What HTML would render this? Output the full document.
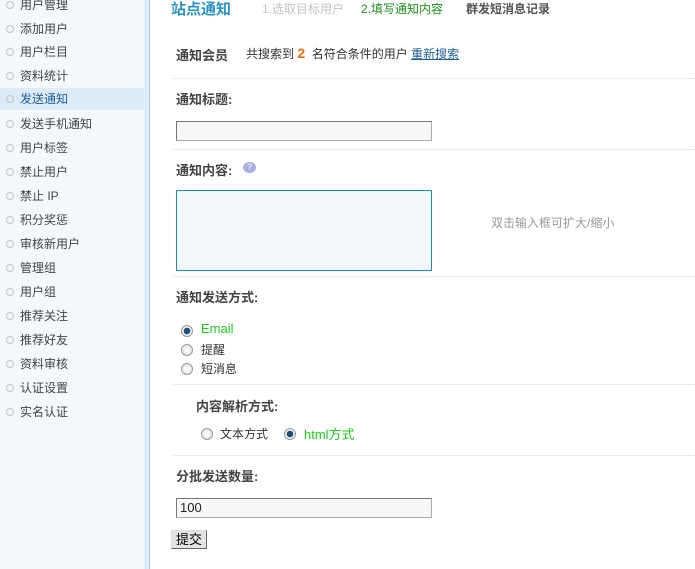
<!DOCTYPE html>
<html><head><meta charset="utf-8"><style>
*{margin:0;padding:0;box-sizing:border-box}
body{width:695px;height:569px;overflow:hidden;background:#fff;font-family:"Liberation Sans","Noto Sans CJK SC",sans-serif;font-size:12px;color:#333;position:relative}
.a{position:absolute;white-space:nowrap}
#sb{position:absolute;left:0;top:0;width:144px;height:569px;background:#f2f8fc}
#sb2{position:absolute;left:144px;top:0;width:6px;height:569px;background:#e0edf8;border-right:1px solid #b4c8dc}
.it{position:absolute;left:0;width:144px;height:22px;line-height:22px;padding-left:20px;color:#444;font-size:12px}
.it:before{content:"";position:absolute;left:6px;top:7px;width:6px;height:6px;border:1px solid #c4c4c4;border-radius:50%}
.act{background:#dcebf7;color:#1e5f96}
.hr{position:absolute;left:172px;width:523px;border-top:1px dotted #cfdde6}
b{color:#444;font-size:13px}
.rad{position:absolute;width:12px;height:12px;border-radius:50%;border:1px solid #999;background:radial-gradient(#fff,#ddd)}
.rad.on{background:radial-gradient(circle,#1b4e7a 0 3px,#e9eef3 3.5px)}
.inp{position:absolute;border:1px solid #aaa;border-top-color:#777;border-left-color:#777;background:#f7f7f7}
</style></head><body>
<div id="sb"></div><div id="sb2"></div>
<div class="it" style="top:-6px">用户管理</div>
<div class="it" style="top:18px">添加用户</div>
<div class="it" style="top:41px">用户栏目</div>
<div class="it" style="top:65px">资料统计</div>
<div class="it act" style="top:88px">发送通知</div>
<div class="it" style="top:113px">发送手机通知</div>
<div class="it" style="top:137px">用户标签</div>
<div class="it" style="top:161px">禁止用户</div>
<div class="it" style="top:185px">禁止 IP</div>
<div class="it" style="top:209px">积分奖惩</div>
<div class="it" style="top:233px">审核新用户</div>
<div class="it" style="top:257px">管理组</div>
<div class="it" style="top:281px">用户组</div>
<div class="it" style="top:305px">推荐关注</div>
<div class="it" style="top:329px">推荐好友</div>
<div class="it" style="top:353px">资料审核</div>
<div class="it" style="top:377px">认证设置</div>
<div class="it" style="top:401px">实名认证</div>

<div class="a" style="left:171px;top:-2px;font-size:15px;font-weight:bold;color:#2a93c2">站点通知</div>
<div class="a" style="left:262px;top:0;color:#c4c4c4">1.选取目标用户</div>
<div class="a" style="left:361px;top:0;color:#1e8f1e">2.填写通知内容</div>
<div class="a" style="left:466px;top:0;font-weight:bold;color:#555">群发短消息记录</div>

<div class="a" style="left:176px;top:45px"><b>通知会员</b></div>
<div class="a" style="left:246px;top:45px">共搜索到 <span style="color:#f07010;font-weight:bold;font-size:14px">2</span> &nbsp;名符合条件的用户 <span style="color:#1e5f96;text-decoration:underline">重新搜索</span></div>
<div class="hr" style="top:78px"></div>
<div class="a" style="left:176px;top:89px"><b>通知标题:</b></div>
<div class="inp" style="left:176px;top:121px;width:256px;height:20px"></div>
<div class="hr" style="top:149px"></div>
<div class="a" style="left:176px;top:160px"><b>通知内容:</b></div>
<div class="a" style="left:243px;top:162px;width:13px;height:11px;border-radius:50%;background:#a9afe0;color:#fff;font-size:9px;text-align:center;line-height:11px">?</div>
<div class="a" style="left:176px;top:190px;width:256px;height:81px;border:1px solid #1f8aad;background:#f4f8fc"></div>
<div class="a" style="left:491px;top:214px;color:#999">双击输入框可扩大/缩小</div>
<div class="hr" style="top:276px"></div>
<div class="a" style="left:176px;top:287px"><b>通知发送方式:</b></div>
<div class="rad on" style="left:181px;top:325px"></div><div class="a" style="left:201px;top:321px;color:#22cc22;font-size:13px">Email</div>
<div class="rad" style="left:181px;top:344px"></div><div class="a" style="left:201px;top:341px">提醒</div>
<div class="rad" style="left:181px;top:363px"></div><div class="a" style="left:201px;top:360px">短消息</div>
<div class="hr" style="top:384px"></div>
<div class="a" style="left:196px;top:396px"><b>内容解析方式:</b></div>
<div class="rad" style="left:201px;top:428px"></div><div class="a" style="left:220px;top:425px">文本方式</div>
<div class="rad on" style="left:284px;top:428px"></div><div class="a" style="left:304px;top:424px;color:#22cc22;font-size:13px">html方式</div>
<div class="hr" style="top:455px"></div>
<div class="a" style="left:176px;top:466px"><b>分批发送数量:</b></div>
<div class="inp" style="left:176px;top:498px;width:256px;height:20px;padding-left:3px;line-height:18px;font-size:13px;color:#222">100</div>
<div class="a" style="left:171px;top:530px;width:36px;height:19px;border:1px solid #666;border-top-color:#ddd;border-left-color:#ddd;background:#e4e4e4;text-align:center;line-height:17px;color:#000;font-size:13px">提交</div>
</body></html>
